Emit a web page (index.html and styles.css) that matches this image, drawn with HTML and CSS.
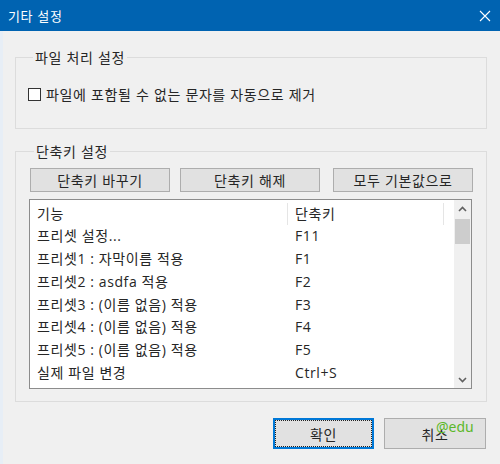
FILE: index.html
```html
<!DOCTYPE html>
<html lang="ko">
<head>
<meta charset="utf-8">
<title>기타 설정</title>
<link rel="stylesheet" href="styles.css">
</head>
<body>
<div class="window">
  <div class="titlebar">
    <span class="title">기타 설정</span>
    <svg class="close" width="12" height="12" viewBox="0 0 12 12"><path d="M1 1 L11 11 M11 1 L1 11" stroke="#fff" stroke-width="1.1" fill="none"/></svg>
  </div>
  <div class="content">
    <fieldset class="group group-file">
      <legend>파일 처리 설정</legend>
      <label class="check-row"><span class="checkbox"></span><span>파일에 포함될 수 없는 문자를 자동으로 제거</span></label>
    </fieldset>
    <fieldset class="group group-keys">
      <legend>단축키 설정</legend>
      <div class="btn-row">
        <div class="btn">단축키 바꾸기</div>
        <div class="btn">단축키 해제</div>
        <div class="btn btn-last">모두 기본값으로</div>
      </div>
      <div class="listbox">
        <div class="list">
          <div class="row header"><span class="cell c1">기능</span><span class="cell c2">단축키</span><span class="cell c3"></span></div>
          <div class="row"><span class="cell">프리셋 설정...</span><span class="cell">F11</span></div>
          <div class="row"><span class="cell">프리셋1 : 자막이름 적용</span><span class="cell">F1</span></div>
          <div class="row"><span class="cell">프리셋2 : asdfa 적용</span><span class="cell">F2</span></div>
          <div class="row"><span class="cell">프리셋3 : (이름 없음) 적용</span><span class="cell">F3</span></div>
          <div class="row"><span class="cell">프리셋4 : (이름 없음) 적용</span><span class="cell">F4</span></div>
          <div class="row"><span class="cell">프리셋5 : (이름 없음) 적용</span><span class="cell">F5</span></div>
          <div class="row"><span class="cell">실제 파일 변경</span><span class="cell">Ctrl+S</span></div>
        </div>
        <div class="scrollbar">
          <div class="arrow"><svg width="9" height="6" viewBox="0 0 9 6"><path d="M1 5 L4.5 1.5 L8 5" stroke="#606060" stroke-width="1.6" fill="none"/></svg></div>
          <div class="track"><div class="thumb"></div></div>
          <div class="arrow"><svg width="9" height="6" viewBox="0 0 9 6"><path d="M1 1 L4.5 4.5 L8 1" stroke="#606060" stroke-width="1.6" fill="none"/></svg></div>
        </div>
      </div>
    </fieldset>
    <div class="footer">
      <div class="btn btn-ok">확인</div>
      <div class="btn btn-cancel">취소<span class="watermark">@edu</span></div>
    </div>
  </div>
</div>
</body>
</html>
```

FILE: styles.css
```css
* { box-sizing: border-box; }
html, body {
  margin: 0;
  padding: 0;
  width: 500px;
  height: 464px;
  overflow: hidden;
  background: #f0f0f0;
  font-family: "Noto Sans CJK KR", "Noto Sans", sans-serif;
  font-size: 14px;
  letter-spacing: 0.6px;
  color: #262626;
}
.window {
  width: 500px;
  height: 464px;
  display: flex;
  flex-direction: column;
}
.titlebar {
  height: 31px;
  background: #0063b1;
  color: #fff;
  display: flex;
  align-items: center;
  justify-content: space-between;
  padding: 0 9px 0 8px;
  flex-shrink: 0;
}
.title { font-size: 13px; line-height: 16px; letter-spacing: 0.6px; }
.close { display: block; }
.content {
  flex: 1;
  border-left: 3px solid #e7eef6;
  padding-top: 17px;
}
.group {
  margin: 0 0 0 12px;
  width: 472px;
  border: 1px solid #dcdcdc;
  padding: 0;
  min-width: 0;
}
.group legend {
  margin-left: 5px;
  padding: 0 2px;
  line-height: 18px;
}
.group-file {
  padding: 19px 0 25px 12px;
}
.check-row {
  display: flex;
  align-items: center;
  height: 18px;
  gap: 5px;
}
.checkbox {
  width: 13px;
  height: 13px;
  border: 1px solid #333;
  background: #fff;
  flex-shrink: 0;
}
.group-keys {
  margin-top: 13px;
  padding: 8px 0 12px 13px;
}
.btn-row {
  display: flex;
  gap: 10px;
  margin-left: 1px;
}
.btn {
  width: 140px;
  height: 24px;
  background: #e1e1e1;
  border: 1px solid #adadad;
  display: flex;
  align-items: center;
  justify-content: center;
  line-height: 16px;
}
.btn-last { margin-left: 3px; }
.listbox {
  margin-top: 7px;
  width: 443px;
  height: 190px;
  border: 1px solid #8c8c8c;
  background: #fff;
  display: flex;
}
.list {
  flex: 1;
  padding-top: 2.5px;
  font-family: "Open Sans", "Noto Sans CJK KR", sans-serif;
}
.row {
  display: grid;
  grid-template-columns: 258px 156px 1fr;
  height: 22.8px;
  align-items: center;
}
.cell {
  padding-left: 7px;
  line-height: 22.8px;
  white-space: nowrap;
}
.header .c1, .header .c2 {
  border-right: 1px solid #e5e5e5;
}
.scrollbar {
  width: 17px;
  background: #f0f0f0;
  display: flex;
  flex-direction: column;
}
.arrow {
  height: 17px;
  display: flex;
  align-items: center;
  justify-content: center;
}
.arrow svg { display: block; }
.track { flex: 1; }
.thumb {
  margin: 2px 1px 0 1px;
  height: 25px;
  background: #cdcdcd;
}
.footer {
  display: flex;
  justify-content: flex-end;
  gap: 10px;
  padding-right: 14px;
  margin-top: 16px;
}
.btn-ok, .btn-cancel {
  width: 101px;
  height: 31px;
}
.btn-cancel { width: 102px; position: relative; }
.btn-ok {
  border: 2px solid #0078d7;
  outline: 1px dotted #222;
  outline-offset: -3px;
}
.watermark {
  position: absolute;
  left: 51px;
  top: 0px;
  color: #5cb82a;
  font-family: "Noto Sans", sans-serif;
  font-size: 14px;
  line-height: 16px;
  letter-spacing: 0;
}
```
